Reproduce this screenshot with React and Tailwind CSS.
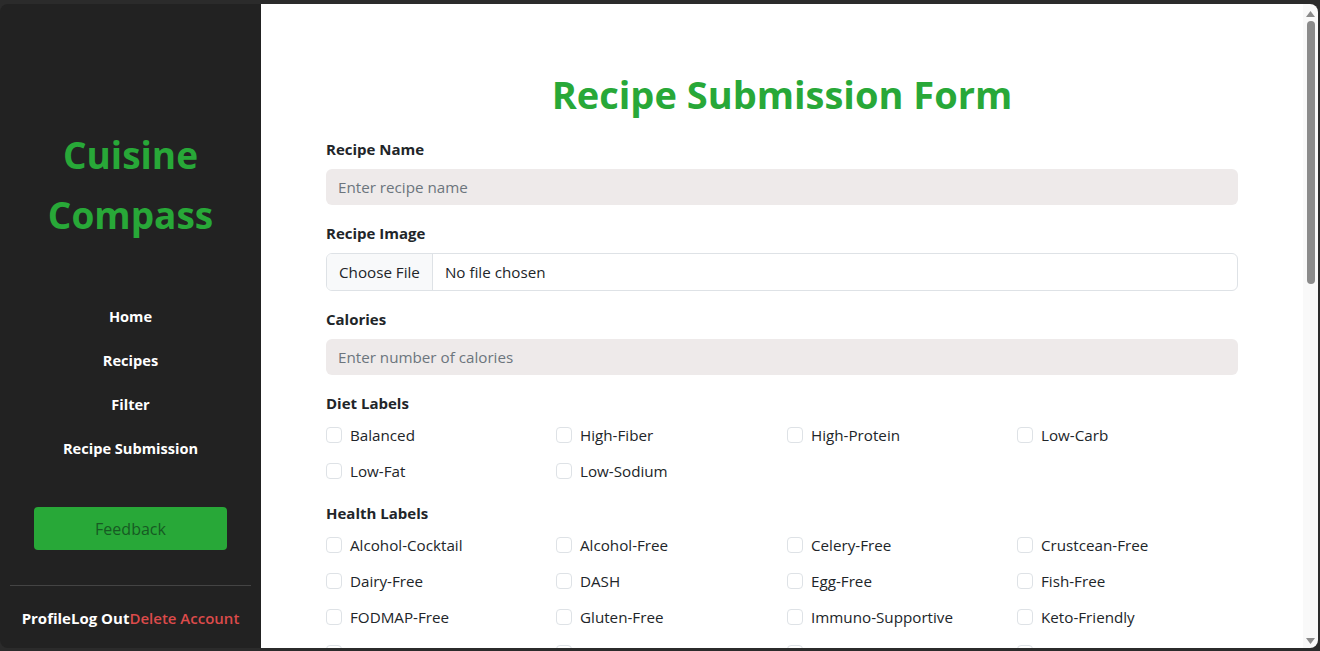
import React from 'react'

const font = { fontFamily: '"Open Sans", "Noto Sans", sans-serif' }

const dietLabels = ['Balanced', 'High-Fiber', 'High-Protein', 'Low-Carb', 'Low-Fat', 'Low-Sodium']

const healthLabels = [
  'Alcohol-Cocktail', 'Alcohol-Free', 'Celery-Free', 'Crustcean-Free',
  'Dairy-Free', 'DASH', 'Egg-Free', 'Fish-Free',
  'FODMAP-Free', 'Gluten-Free', 'Immuno-Supportive', 'Keto-Friendly',
  'Kidney-Friendly', 'Kosher', 'Low-Potassium', 'Low-Sugar',
]

function CheckGrid({ items }) {
  return (
    <div className="grid grid-cols-[230px_231px_230px_1fr]">
      {items.map(item => (
        <label key={item} className="flex items-center h-9 text-[15.2px] text-[#212529]">
          <span className="w-4 h-4 rounded border border-[#dee2e6] bg-white shrink-0"></span>
          <span className="ml-2">{item}</span>
        </label>
      ))}
    </div>
  )
}

function Sidebar() {
  return (
    <aside className="w-[261px] shrink-0 bg-[#222222] flex flex-col items-center text-white">
      <h1 className="mt-[121px] text-[37px] leading-[60px] font-bold text-[#28a838] text-center">
        Cuisine<br />Compass
      </h1>
      <nav className="mt-[49px] flex flex-col items-center">
        {['Home', 'Recipes', 'Filter', 'Recipe Submission'].map(n => (
          <a key={n} className="py-[10px] leading-6 text-[14.6px] font-bold">{n}</a>
        ))}
      </nav>
      <button className="mt-[37px] w-[193px] h-[43px] rounded bg-[#28a838] text-[#175a23] text-base">
        Feedback
      </button>
      <div className="mt-[35px] w-[241px] border-t border-[#444444]"></div>
      <div className="mt-[20px] text-[15px] font-bold leading-6">
        <span>Profile</span>
        <span>Log Out</span>
        <span className="text-[#dc4b4b] font-semibold">Delete Account</span>
      </div>
    </aside>
  )
}

function Scrollbar() {
  return (
    <div className="w-[15px] shrink-0 bg-[#f9f9f9] flex flex-col items-center">
      <svg width="9" height="6" viewBox="0 0 9 6" className="mt-[7px]">
        <path d="M4.5 0L9 6H0z" fill="#8b8b8b" />
      </svg>
      <div className="mt-[4px] w-[8px] h-[263px] rounded-full bg-[#8b8b8b]"></div>
      <div className="flex-1"></div>
      <svg width="9" height="6" viewBox="0 0 9 6" className="mb-[4px]">
        <path d="M0 0H9L4.5 6z" fill="#8b8b8b" />
      </svg>
    </div>
  )
}

export default function App() {
  return (
    <div className="h-[651px] bg-[#2b2b2b] pt-1 pb-[3px] pr-[2px]" style={font}>
      <div className="h-full flex rounded-lg overflow-hidden">
        <Sidebar />
        <main className="flex-1 bg-white overflow-hidden">
          <div className="w-[912px] mx-auto">
            <h2 className="mt-[66px] text-[38px] leading-[48px] font-bold text-[#28a838] text-center">
              Recipe Submission Form
            </h2>
            <div className="mt-[19px]">
              <div className="text-[15px] font-bold leading-6 text-[#212529]">Recipe Name</div>
              <div className="mt-[8px] h-9 rounded-md bg-[#eeeaea] flex items-center px-3 text-[15.2px] text-[#6c757d]">
                Enter recipe name
              </div>
            </div>
            <div className="mt-[16px]">
              <div className="text-[15px] font-bold leading-6 text-[#212529]">Recipe Image</div>
              <div className="mt-[8px] h-[38px] rounded-md border border-[#dee2e6] flex items-center text-[15.2px] text-[#212529] overflow-hidden">
                <span className="h-full px-3 flex items-center bg-[#f8f9fa] border-r border-[#dee2e6]">Choose File</span>
                <span className="ml-3">No file chosen</span>
              </div>
            </div>
            <div className="mt-[16px]">
              <div className="text-[15px] font-bold leading-6 text-[#212529]">Calories</div>
              <div className="mt-[8px] h-9 rounded-md bg-[#eeeaea] flex items-center px-3 text-[15.2px] text-[#6c757d]">
                Enter number of calories
              </div>
            </div>
            <div className="mt-[16px]">
              <div className="text-[15px] font-bold leading-6 text-[#212529]">Diet Labels</div>
              <div className="mt-[2px]">
                <CheckGrid items={dietLabels} />
              </div>
            </div>
            <div className="mt-3">
              <div className="text-[15px] font-bold leading-6 text-[#212529]">Health Labels</div>
              <div className="mt-[2px]">
                <CheckGrid items={healthLabels} />
              </div>
            </div>
          </div>
        </main>
        <Scrollbar />
      </div>
    </div>
  )
}
